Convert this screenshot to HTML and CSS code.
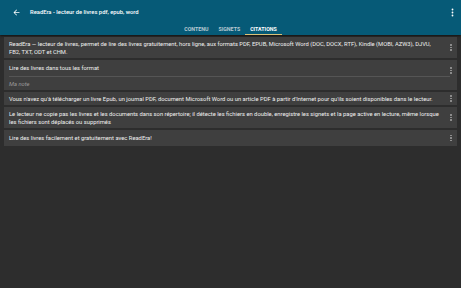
FILE: index.html
```html
<!DOCTYPE html>
<html lang="fr">
<head>
<meta charset="utf-8">
<link rel="stylesheet" href="styles.css">
</head>
<body>
<div class="app">
  <header class="appbar">
    <div class="toolbar">
      <svg class="back" viewBox="0 0 24 24" width="9" height="9"><path d="M20 11H7.83l5.59-5.59L12 4l-8 8 8 8 1.41-1.41L7.83 13H20v-2z" fill="#fff"/></svg>
      <div class="title">ReadEra - lecteur de livres pdf, epub, word</div>
      <svg class="kebab" viewBox="0 0 4 12" width="3" height="9"><circle cx="2" cy="2" r="1.2" fill="#fff"/><circle cx="2" cy="6" r="1.2" fill="#fff"/><circle cx="2" cy="10" r="1.2" fill="#fff"/></svg>
    </div>
    <nav class="tabs">
      <div class="tab">CONTENU</div>
      <div class="tab">SIGNETS</div>
      <div class="tab active">CITATIONS</div>
    </nav>
  </header>
  <main class="list">
    <div class="card">
      <div class="body"><p class="quote">ReadEra — lecteur de livres, permet de lire des livres gratuitement, hors ligne, aux formats PDF, EPUB, Microsoft Word (DOC, DOCX, RTF), Kindle (MOBI, AZW3), DJVU, FB2, TXT, ODT et CHM.</p></div>
      <div class="more"><span></span><span></span><span></span></div>
    </div>
    <div class="card noted">
      <div class="body">
        <p class="quote">Lire des livres dans tous les format</p>
        <div class="divider"></div>
        <p class="note">Ma note</p>
      </div>
      <div class="more top"><span></span><span></span><span></span></div>
    </div>
    <div class="card">
      <div class="body"><p class="quote">Vous n'avez qu'à télécharger un livre Epub, un journal PDF, document Microsoft Word ou un article PDF à partir d'Internet pour qu'ils soient disponibles dans le lecteur.</p></div>
      <div class="more"><span></span><span></span><span></span></div>
    </div>
    <div class="card">
      <div class="body"><p class="quote">Le lecteur ne copie pas les livres et les documents dans son répertoire; il détecte les fichiers en double, enregistre les signets et la page active en lecture, même lorsque les fichiers sont déplacés ou supprimés</p></div>
      <div class="more"><span></span><span></span><span></span></div>
    </div>
    <div class="card last">
      <div class="body"><p class="quote">Lire des livres facilement et gratuitement avec ReadEra!</p></div>
      <div class="more"><span></span><span></span><span></span></div>
    </div>
  </main>
</div>
</body>
</html>
```
FILE: styles.css
```css
* { box-sizing: border-box; }
html, body { margin: 0; padding: 0; }
body {
  width: 461px;
  height: 288px;
  background: #2d2d2d;
  font-family: Roboto, "Noto Sans", sans-serif;
  overflow: hidden;
}
.app { display: flex; flex-direction: column; height: 288px; }
.appbar {
  background: #065a77;
  height: 35px;
  box-shadow: 0 1px 2px rgba(0,0,0,0.6);
  display: flex;
  flex-direction: column;
}
.toolbar {
  height: 24px;
  display: flex;
  align-items: center;
  padding: 0 7px 0 12px;
}
.back { display: block; margin-right: 9px; }
.title {
  color: #fff;
  font-size: 5.8px;
  font-weight: 500;
  flex: 1;
}
.kebab { display: block; }
.tabs {
  flex: 1;
  display: flex;
  justify-content: center;
  align-items: stretch;
}
.tab {
  color: #b9cbd3;
  font-size: 5.3px;
  font-weight: 700;
  padding: 0 5px 1px;
  display: flex;
  align-items: center;
  border-bottom: 1.5px solid transparent;
}
.tab.active { color: #fff; border-bottom-color: #d9c27a; }
.list {
  padding: 2px 4px;
  display: flex;
  flex-direction: column;
  gap: 2px;
}
.card {
  background: #3f3f3f;
  display: flex;
  align-items: center;
  padding: 2.5px 2px 2.5px 5px;
  min-height: 13px;
}
.card.noted { padding-top: 4px; padding-bottom: 2px; }
.card.last { min-height: 16px; }
.body { flex: 1; }
.quote {
  margin: 0;
  color: #f0f0f0;
  font-size: 5.8px;
  line-height: 8px;
}
.divider { height: 1px; background: #555; margin: 4px -11px 3px 0; }
.note {
  margin: 0;
  color: #9a9a9a;
  font-size: 5.8px;
  font-style: italic;
  line-height: 8px;
}
.more {
  width: 8px;
  display: flex;
  flex-direction: column;
  align-items: center;
  gap: 1px;
  margin-left: 8px;
}
.more.top { align-self: flex-start; margin-top: 3px; }
.more span { width: 1.5px; height: 1.5px; background: #9a9a9a; border-radius: 50%; }
```
